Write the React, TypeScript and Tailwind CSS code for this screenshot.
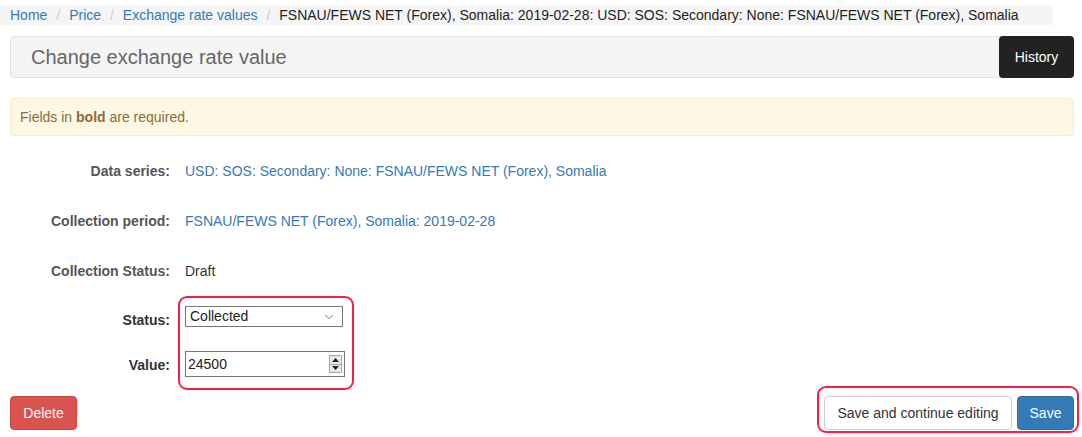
import { ChevronDown } from 'lucide-react';

const rows = [
  { label: 'Data series:', value: 'USD: SOS: Secondary: None: FSNAU/FEWS NET (Forex), Somalia', link: true },
  { label: 'Collection period:', value: 'FSNAU/FEWS NET (Forex), Somalia: 2019-02-28', link: true },
  { label: 'Collection Status:', value: 'Draft', link: false },
];

function Sep() {
  return <span className="pl-[9px] pr-[5px] text-[#ccc]">/&nbsp;</span>;
}

function Spinner() {
  return (
    <div className="flex flex-col w-[13px] h-[18px] border border-[#a9a9a9] bg-[#e9e9e9]">
      <div className="flex-1 flex items-center justify-center border-b border-[#a9a9a9]">
        <svg width="7" height="4" viewBox="0 0 7 4"><path d="M0 4 L3.5 0 L7 4 Z" fill="#222" /></svg>
      </div>
      <div className="flex-1 flex items-center justify-center">
        <svg width="7" height="4" viewBox="0 0 7 4"><path d="M0 0 L3.5 4 L7 0 Z" fill="#222" /></svg>
      </div>
    </div>
  );
}

export default function App() {
  return (
    <div className="w-[1082px] h-[437px] bg-white overflow-hidden font-['Liberation_Sans',Arial,sans-serif] text-[14px] text-[#333]">
      {/* breadcrumb */}
      <div className="mt-[5px] h-[20px] w-[1053px] bg-[#f5f5f5] flex items-center pl-[10px] leading-[20px] whitespace-nowrap">
        <a className="text-[#337ab7]">Home</a>
        <Sep />
        <a className="text-[#337ab7]">Price</a>
        <Sep />
        <a className="text-[#337ab7]">Exchange rate values</a>
        <Sep />
        <span className="text-[#222]">
          FSNAU/FEWS NET (Forex), Somalia: 2019-02-28: USD: SOS: Secondary: None: FSNAU/FEWS NET (Forex), Somalia
        </span>
      </div>

      <div className="pl-[10px] pr-[8px]">
        {/* header */}
        <div className="mt-[11px] h-[42px] flex items-stretch rounded-[4px] border border-[#e3e3e3] bg-[#f5f5f5]">
          <h1 className="flex-1 flex items-center pl-[20px] text-[20px] text-[#666]">Change exchange rate value</h1>
          <button className="-my-px -mr-px w-[75px] rounded-[4px] bg-[#222] text-white text-[14px]">History</button>
        </div>

        {/* alert */}
        <div className="mt-[20px] h-[38px] flex items-center pl-[9px] rounded-[4px] border border-[#faebcc] bg-[#fcf8e3] text-[#8a6d3b]">
          <span>
            Fields in <b>bold</b> are required.
          </span>
        </div>

        {/* form */}
        <div className="mt-[10px]">
          {rows.map((r) => (
            <div key={r.label} className="h-[50px] flex items-center">
              <div className="w-[160px] text-right font-bold text-[#555]">{r.label}</div>
              <div className={`ml-[15px] ${r.link ? 'text-[#337ab7]' : 'text-[#333]'}`}>{r.value}</div>
            </div>
          ))}

          <div className="relative pt-[10px]">
            <div className="pointer-events-none absolute left-[168px] top-0 w-[176px] h-[94px] rounded-[9px] border-2 border-[#f0214b]" />
            <div className="h-[21px] flex items-start">
              <div className="w-[160px] pt-[4px] leading-[20px] text-right font-bold text-[#333]">Status:</div>
              <div className="ml-[15px] w-[158px] h-[21px] flex items-center justify-between border border-[#767676] bg-white pl-[4px] pr-[6px] text-[#222]">
                <span>Collected</span>
                <ChevronDown size={14} strokeWidth={1.25} className="text-[#444]" />
              </div>
            </div>
            <div className="mt-[24px] h-[26px] flex items-start">
              <div className="w-[160px] pt-[4px] leading-[20px] text-right font-bold text-[#333]">Value:</div>
              <div className="ml-[15px] w-[160px] h-[26px] flex items-center justify-between border border-[#767676] bg-white pl-[2px] pr-[2px] text-[#222]">
                <span>24500</span>
                <Spinner />
              </div>
            </div>
          </div>
        </div>

        {/* buttons */}
        <div className="mt-[19px] flex items-center justify-between">
          <button className="h-[34px] w-[67px] rounded-[4px] bg-[#d9534f] border border-[#d43f3a] text-white text-[14px]">Delete</button>
          <div className="relative flex items-center gap-[5px]">
            <div className="pointer-events-none absolute -left-[7px] -right-[5px] -top-[10px] -bottom-[3px] rounded-[9px] border-2 border-[#f0214b]" />
            <button className="h-[34px] w-[188px] rounded-[4px] bg-white border border-[#ccc] text-[#333] text-[14px]">Save and continue editing</button>
            <button className="h-[34px] w-[57px] rounded-[4px] bg-[#337ab7] border border-[#2e6da4] text-white text-[14px]">Save</button>
          </div>
        </div>
      </div>
    </div>
  );
}
